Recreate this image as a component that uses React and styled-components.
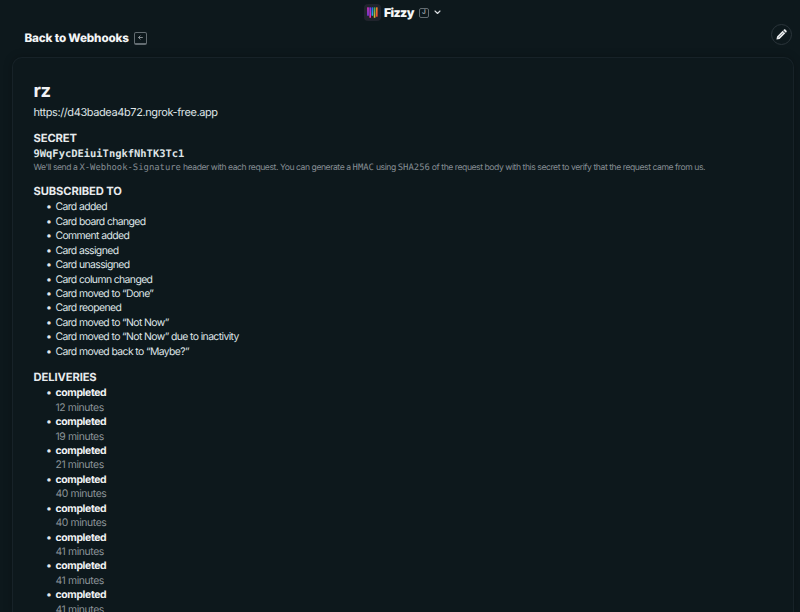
import React, { Fragment } from "react";
import styled, { createGlobalStyle, css } from "styled-components";

const EVENTS = [
  "Card added",
  "Card board changed",
  "Comment added",
  "Card assigned",
  "Card unassigned",
  "Card column changed",
  "Card moved to “Done”",
  "Card reopened",
  "Card moved to “Not Now”",
  "Card moved to “Not Now” due to inactivity",
  "Card moved back to “Maybe?”"
];

const DELIVERIES = [12, 19, 21, 40, 40, 41, 41, 41];

export default function App() {
  return (
    <Fragment>
      <GlobalStyle />
      <Page>
        <TopBar>
          <AppMark />
          <Brand>Fizzy</Brand>
          <Key size={10}>J</Key>
          <Chevron />
        </TopBar>
        <Toolbar>
          <BackLink href="#">
            Back to Webhooks
            <Key size={13}>
              <BackArrow />
            </Key>
          </BackLink>
          <EditButton aria-label="Edit">
            <Pencil />
          </EditButton>
        </Toolbar>
        <Panel>
          <Title>rz</Title>
          <Url>https://d43badea4b72.ngrok-free.app</Url>

          <Heading>Secret</Heading>
          <Secret>9WqFycDEiuiTngkfNhTK3Tc1</Secret>
          <Hint>
            We'll send a <code>X-Webhook-Signature</code> header with each
            request. You can generate a <code>HMAC</code> using{" "}
            <code>SHA256</code> of the request body with this secret to verify
            that the request came from us.
          </Hint>

          <Heading>Subscribed to</Heading>
          <List>
            {EVENTS.map(event => (
              <Item key={event}>
                <Label>{event}</Label>
              </Item>
            ))}
          </List>

          <Heading>Deliveries</Heading>
          <List>
            {DELIVERIES.map((minutes, i) => (
              <Item key={i}>
                <Status>completed</Status>
                <Time>{minutes} minutes</Time>
              </Item>
            ))}
          </List>
        </Panel>
      </Page>
    </Fragment>
  );
}

const BARS = [
  { x: 3.2, h: 8.6, from: "#e532c8", to: "#7a3cf0" },
  { x: 5.4, h: 10.6, from: "#7b35ee", to: "#f32fb4" },
  { x: 7.6, h: 8.6, from: "#2b62ee", to: "#22b9ea" },
  { x: 9.8, h: 10.6, from: "#2fae63", to: "#f0bd28" },
  { x: 12, h: 9.6, from: "#f98a22", to: "#f2453a" }
];

const AppMark = () => (
  <svg width="17" height="17" viewBox="0 0 17 17">
    <rect width="17" height="17" rx="4" fill="#20242d" />
    {BARS.map(({ x, h, from, to }, i) => (
      <Fragment key={x}>
        <linearGradient id={`bar${i}`} x2="0" y2="1">
          <stop offset="0" stopColor={from} />
          <stop offset="1" stopColor={to} />
        </linearGradient>
        <rect x={x} y="3.2" width="1.6" height={h} rx=".5" fill={`url(#bar${i})`} />
      </Fragment>
    ))}
  </svg>
);

const Chevron = () => (
  <svg width="7" height="5" viewBox="0 0 7 5" fill="none">
    <path
      d="M1 1l2.5 2.5L6 1"
      stroke="#dce0e3"
      strokeWidth="1.1"
      strokeLinecap="round"
      strokeLinejoin="round"
    />
  </svg>
);

const BackArrow = () => (
  <svg width="5" height="5" viewBox="0 0 5 5" fill="none">
    <path d="M4.8 2.5H.6M2.4.6L.5 2.5l1.9 1.9" stroke="#a5abaf" strokeWidth=".8" />
  </svg>
);

const Pencil = () => (
  <svg width="11" height="11" viewBox="0 0 12 12">
    <path
      d="M.5 11.5l.6-3.4 6.2-6.2 2.8 2.8-6.2 6.2zM7.9 1.3l.6-.6c.6-.6 1.3-.6 1.9 0l.9.9c.6.6.6 1.3 0 1.9l-.6.6z"
      fill="#e8eaec"
    />
    <path d="M2.8 9.2l5.2-5.2" stroke="#69747a" strokeWidth=".8" />
  </svg>
);

const GlobalStyle = createGlobalStyle`
  * {
    box-sizing: border-box;
  }

  body {
    margin: 0;
    overflow: hidden;
    background: #0d181c;
    color: #dfe4e7;
    font: 10.4px/14.44px Inter, "Liberation Sans", sans-serif;
    text-rendering: geometricPrecision;
  }
`;

const mono = css`
  font-family: "DejaVu Sans Mono", "Liberation Mono", monospace;
`;

const Page = styled.div`
  display: flex;
  flex-direction: column;
  height: 612px;
  overflow: hidden;
`;

const TopBar = styled.header`
  display: flex;
  align-items: center;
  height: 25px;
  flex: none;
  padding-left: 364px;
`;

const Brand = styled.span`
  margin: 1px 5px 0 3px;
  color: #f5f7f8;
  font-size: 12.2px;
  font-weight: 900;
  letter-spacing: -0.6px;
`;

const Key = styled.kbd`
  display: flex;
  align-items: center;
  justify-content: center;
  width: ${props => props.size}px;
  height: ${props => props.size}px;
  border: 1px solid #636c71;
  border-bottom-width: ${props => (props.size > 10 ? 2 : 1)}px;
  border-radius: 2px;
  color: #a5abaf;
  font: 600 6.5px/1 Inter, sans-serif;

  & + svg {
    margin-left: 5px;
  }
`;

const Toolbar = styled.nav`
  display: flex;
  justify-content: space-between;
  height: 32px;
  flex: none;
  padding: 0 8px 0 24.5px;
`;

const BackLink = styled.a`
  display: flex;
  align-items: center;
  gap: 5px;
  height: 26px;
  color: #f3f5f6;
  font-size: 11.7px;
  font-weight: 850;
  letter-spacing: -0.17px;
  text-decoration: none;
`;

const EditButton = styled.button`
  display: flex;
  align-items: center;
  justify-content: center;
  width: 21px;
  height: 21px;
  margin-top: -1px;
  padding: 0;
  border: 1px solid #2a343a;
  border-radius: 50%;
  background: none;
`;

const Panel = styled.main`
  flex: 1;
  min-height: 0;
  margin: 0 6px 0 12px;
  padding: 22px 20px 0 20.5px;
  overflow: hidden;
  border: 1px solid #172228;
  border-bottom: 0;
  border-radius: 10px 10px 0 0;
  box-shadow: 0 0 8px rgba(0, 0, 0, 0.25);
`;

const Title = styled.h1`
  margin: 0;
  color: #f0f2f4;
  font-size: 18.4px;
  line-height: 23px;
  font-weight: 700;
  letter-spacing: -0.5px;
`;

const Url = styled.div`
  margin-top: 2px;
  font-size: 11px;
  letter-spacing: -0.4px;
`;

const Heading = styled.h2`
  margin: 11.2px 0 0;
  color: #e8ebee;
  font-size: 11.2px;
  line-height: 15px;
  font-weight: 650;
  letter-spacing: -0.1px;
  text-transform: uppercase;

  & + ul {
    padding-top: 1.1px;
  }

  ul + & {
    margin-top: 10.9px;
  }
`;

const Secret = styled.div`
  ${mono};
  padding-top: 1.5px;
  font-weight: 700;
  font-size: 10.45px;
  line-height: 15px;
`;

const Hint = styled.p`
  margin: 0 0 -1.5px;
  padding-top: 1px;
  color: #858d93;
  font-size: 8.6px;
  line-height: 11.5px;
  letter-spacing: -0.438px;
  white-space: nowrap;

  code {
    ${mono};
    font-size: 8.9px;
    letter-spacing: 0;
  }
`;

const List = styled.ul`
  margin: 0;
  padding-left: 12.5px;
  list-style: none;
`;

const Item = styled.li`
  display: grid;
  grid-template-columns: 9.5px auto;

  &::before {
    content: "•";
    color: #e4e8eb;
  }
`;

const Label = styled.span`
  grid-column: 2;
  letter-spacing: -0.6px;
`;

const Status = styled.div`
  grid-column: 2;
  color: #f0f2f4;
  font-weight: 700;
  letter-spacing: -0.35px;
`;

const Time = styled.div`
  grid-column: 2;
  color: #8b9398;
  letter-spacing: -0.4px;
`;
